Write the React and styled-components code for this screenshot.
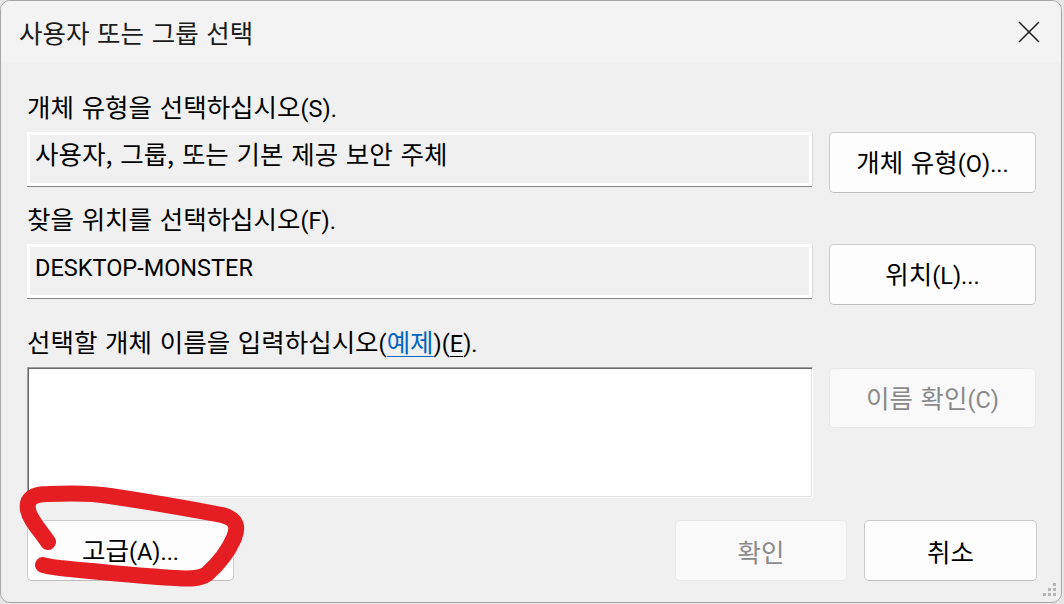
import React from "react";
import styled, { createGlobalStyle } from "styled-components";

const GlobalStyle = createGlobalStyle`
  html, body { margin: 0; padding: 0; background: #e6e6e6; }
  body {
    width: 1064px; height: 604px; overflow: hidden;
    font-family: "Noto Sans CJK KR", "Noto Sans", sans-serif;
  }
  #root { position: relative; width: 1064px; height: 604px; }
`;

const Window = styled.div`
  position: relative;
  box-sizing: border-box;
  width: 1062px;
  height: 603px;
  border: 1px solid #a6a6a6;
  border-radius: 10px;
  background: #f0f0f0;
  overflow: hidden;
  display: flex;
  flex-direction: column;
  color: #000;
  font-size: 25.5px;
  word-spacing: 2px;
`;

const TitleBar = styled.div`
  flex: none;
  height: 61px;
  background: #f3f3f3;
  display: flex;
  align-items: center;
  justify-content: space-between;
  padding: 0 21px 0 18px;
`;

const Title = styled.h1`
  margin: 0;
  font-size: 25.5px;
  font-weight: 400;
  line-height: 32px;
  color: #1b1b1b;
`;

const CloseIcon = styled.svg`
  width: 22px;
  height: 22px;
  display: block;
`;

const Body = styled.div`
  flex: 1;
  display: flex;
  flex-direction: column;
  padding: 0 24px 0 26px;
`;

const Section = styled.section`
  display: flex;
  flex-direction: column;
  margin-top: ${(p) => p.$top}px;
`;

const Label = styled.div`
  line-height: 32px;
  height: 32px;
  margin-bottom: 10px;
  white-space: nowrap;
`;

const Latin = styled.span`
  font-family: Roboto, "Noto Sans CJK KR", sans-serif;
  font-size: 23.5px;
`;

const Row = styled.div`
  display: grid;
  grid-template-columns: 786px 207px;
  column-gap: 16px;
  align-items: start;
`;

const Field = styled.div`
  box-sizing: border-box;
  width: 785px;
  height: 54px;
  border: 3px solid #fff;
  background: #f0f0f0;
  box-shadow: 0 1px 0 #868686, 1px 0 0 #dadada;
  padding: 2px 0 0 5px;
  line-height: 32px;
  white-space: nowrap;
`;

const NameBox = styled.div`
  box-sizing: border-box;
  width: 786px;
  height: 131px;
  background: #fff;
  border-style: solid;
  border-width: 1px;
  border-color: #a0a0a0 #fff #fff #a0a0a0;
  box-shadow: inset 1px 1px 0 #696969, inset -1px -1px 0 #e3e3e3;
`;

const Button = styled.button`
  box-sizing: border-box;
  width: ${(p) => p.$w || 207}px;
  height: ${(p) => p.$h || 61}px;
  margin-top: ${(p) => p.$mt || 0}px;
  border-radius: 5px;
  border: 1px solid ${(p) => (p.disabled ? "#e9e9e9" : "#cccccc")};
  border-bottom-color: ${(p) => (p.disabled ? "#e9e9e9" : "#bdbdbd")};
  background: ${(p) => (p.disabled ? "#f9f9f9" : "#fdfdfd")};
  color: ${(p) => (p.disabled ? "#8a8a8a" : "#000")};
  font-family: inherit;
  font-size: 25.5px;
  word-spacing: 2px;
  line-height: 32px;
  padding: 0;
  white-space: nowrap;
  cursor: default;
`;

const Link = styled.a`
  color: #0067c0;
  text-decoration: underline;
  text-decoration-thickness: 1px;
  text-underline-offset: 4px;
`;

const Mnemonic = styled.span`
  text-decoration: underline;
  text-decoration-thickness: 1px;
  text-underline-offset: 4px;
`;

const Footer = styled.div`
  display: flex;
  align-items: center;
  margin-top: 22px;
`;

const Spacer = styled.div`
  flex: 1;
`;

const FooterGroup = styled.div`
  display: flex;
  gap: 17px;
`;

const Grip = styled.svg`
  position: absolute;
  right: 3px;
  bottom: 2px;
  width: 18px;
  height: 18px;
`;

const Annotation = styled.svg`
  position: absolute;
  left: 0;
  top: 0;
  width: 1064px;
  height: 604px;
  pointer-events: none;
`;

export default function App() {
  return (
    <>
      <GlobalStyle />
      <Window>
        <TitleBar>
          <Title>사용자 또는 그룹 선택</Title>
          <CloseIcon viewBox="0 0 22 22">
            <path d="M1 1 L21 21 M21 1 L1 21" stroke="#1a1a1a" strokeWidth="1.5" fill="none" />
          </CloseIcon>
        </TitleBar>
        <Body>
          <Section $top={28}>
            <Label>개체 유형을 선택하십시오<Latin>(S).</Latin></Label>
            <Row>
              <Field>사용자, 그룹, 또는 기본 제공 보안 주체</Field>
              <Button>개체 유형<Latin>(O)...</Latin></Button>
            </Row>
          </Section>
          <Section $top={9}>
            <Label>찾을 위치를 선택하십시오<Latin>(F).</Latin></Label>
            <Row>
              <Field><Latin>DESKTOP-MONSTER</Latin></Field>
              <Button>위치<Latin>(L)...</Latin></Button>
            </Row>
          </Section>
          <Section $top={20}>
            <Label>
              선택할 개체 이름을 입력하십시오<Latin>(</Latin><Link>예제</Link>
              <Latin>)(<Mnemonic>E</Mnemonic>).</Latin>
            </Label>
            <Row>
              <NameBox />
              <Button disabled $h={60} $mt={1}>이름 확인<Latin>(C)</Latin></Button>
            </Row>
          </Section>
          <Footer>
            <Button>고급<Latin>(A)...</Latin></Button>
            <Spacer />
            <FooterGroup>
              <Button disabled $w={172}>확인</Button>
              <Button $w={173}>취소</Button>
            </FooterGroup>
          </Footer>
        </Body>
        <Grip viewBox="0 0 18 18">
          {[
            [13, 1],
            [8, 6], [13, 6],
            [3, 11], [8, 11], [13, 11],
          ].map(([x, y], i) => (
            <rect key={i} x={x} y={y} width="3" height="3" fill="#b5b5b5" />
          ))}
        </Grip>
      </Window>
      <Annotation viewBox="0 0 1064 604">
        <path
          d="M48 542 C40 530 30 520 28 510 C26 498 34 494 48 494 C70 493 92 493 110 496 C150 502 190 509 222 515 C238 519 238 528 234 538 C228 552 216 566 207 574 C200 579 190 579 175 578 C140 576 100 572 60 568 C52 567 46 566 43 565"
          stroke="#e41e22"
          strokeWidth="16"
          strokeLinecap="round"
          strokeLinejoin="round"
          fill="none"
        />
      </Annotation>
    </>
  );
}
